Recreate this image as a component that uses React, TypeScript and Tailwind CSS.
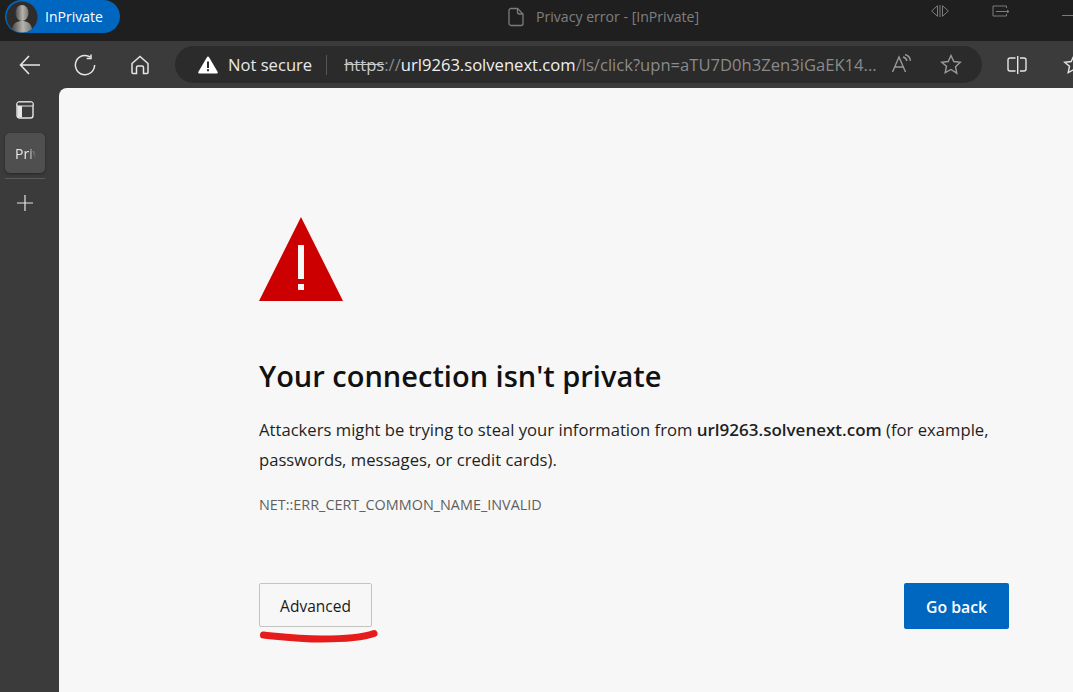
const font = { fontFamily: '"Open Sans", "Noto Sans", sans-serif' }

function TitleBar() {
  return (
    <div className="relative flex h-[41px] shrink-0 items-start bg-[#1f1f1f]">
      <div className="ml-[5px] flex h-[33px] w-[115px] items-center rounded-full bg-[#0067c0]">
        <svg width="32" height="32" viewBox="0 0 32 32" className="ml-px">
          <defs>
            <linearGradient id="face" x1="0" y1="0" x2="1" y2="0">
              <stop offset="0" stopColor="#4a4a48" />
              <stop offset="0.55" stopColor="#b5b3ae" />
              <stop offset="1" stopColor="#77756f" />
            </linearGradient>
          </defs>
          <circle cx="16" cy="16" r="15.5" fill="#2f2d2c" />
          <ellipse cx="16" cy="12" rx="6.5" ry="8" fill="url(#face)" />
          <path d="M6 28c1-6 5-8 10-8s9 2 10 8c-3 2.5-6 3.5-10 3.5S9 30.5 6 28z" fill="url(#face)" />
        </svg>
        <span className="ml-[7px] text-[14px] text-white" style={font}>InPrivate</span>
      </div>
      <div className="ml-[387px] mt-[6px] flex items-center">
        <svg width="18" height="20" viewBox="0 0 18 20" fill="none" stroke="#7c7c7c" strokeWidth="1.3">
          <path d="M2 3.5a2 2 0 0 1 2-2h6.5L16 7v9.5a2 2 0 0 1-2 2H4a2 2 0 0 1-2-2z" />
          <path d="M10.5 1.5V5a2 2 0 0 0 2 2H16" />
        </svg>
        <span className="ml-[11px] text-[14.1px] text-[#7f7f7f]" style={font}>Privacy error - [InPrivate]</span>
      </div>
      <svg width="18" height="12" viewBox="0 0 18 12" fill="none" stroke="#7c7c7c" strokeWidth="1" className="absolute left-[931px] top-[5px]">
        <path d="M6.5.7L.7 6l5.800 5.300zM11.500.7L17.300 6l-5.800 5.300z" />
        <path d="M9 0v12" />
      </svg>
      <svg width="18" height="12" viewBox="0 0 18 12" fill="none" stroke="#7c7c7c" strokeWidth="1" className="absolute left-[992px] top-[5px]">
        <path d="M14.5 3V1H1v10h13.5V9" />
        <path d="M4 6.5h13M15 5l2 1.5L15 8" />
      </svg>
      <div className="absolute left-[1062px] top-[15px] h-px w-[11px] bg-[#7c7c7c]" />
    </div>
  )
}

function ToolBar() {
  return (
    <div className="flex h-[47px] shrink-0 items-center overflow-hidden bg-[#3b3b3b]">
      <svg width="22" height="20" viewBox="0 0 22 20" fill="none" stroke="#e6e6e6" strokeWidth="1.6" className="ml-[19px] shrink-0">
        <path d="M21 10H1.5M10 1L1.5 10l8.500 9" />
      </svg>
      <svg width="22" height="22" viewBox="0 0 22 22" fill="none" stroke="#e6e6e6" strokeWidth="1.5" className="ml-[33px] shrink-0">
        <path d="M16.5 3.200A9.600 9.600 0 1 0 20.600 11" />
        <path d="M17 .5v4h-4.300" />
      </svg>
      <svg width="20" height="20" viewBox="0 0 20 20" fill="none" stroke="#e6e6e6" strokeWidth="1.5" className="ml-[34px] shrink-0">
        <path d="M2 8.5L10 1.5l8 7v9a1 1 0 0 1-1 1h-3.500v-6a1.500 1.500 0 0 0-1.500-1.500H8a1.500 1.500 0 0 0-1.500 1.500v6H3a1 1 0 0 1-1-1z" />
      </svg>
      <div className="ml-[25px] flex h-[37px] w-[807px] shrink-0 items-center rounded-full bg-[#2b2b2b]" style={font}>
        <svg width="20" height="18" viewBox="0 0 20 18" className="ml-[23px] shrink-0">
          <path d="M10 .5a1 1 0 0 1 .9.5l8.800 15a1 1 0 0 1-.9 1.500H1.200a1 1 0 0 1-.9-1.500L9.100 1a1 1 0 0 1 .9-.5z" fill="#fff" />
          <rect x="9" y="5.5" width="2" height="6.5" fill="#2b2b2b" />
          <rect x="9" y="13.2" width="2" height="2" fill="#2b2b2b" />
        </svg>
        <span className="ml-[10px] pt-[2px] text-[16.6px] text-[#e8e8e8]">Not secure</span>
        <div className="ml-[14px] h-[20px] w-px bg-[#555555]" />
        <div className="ml-[17px] whitespace-nowrap pt-[2px] text-[16.6px]">
          <span className="text-[#c9c9c9] line-through">https</span>
          <span className="text-[#8a8a8a]">://</span>
          <span className="text-[#f0f0f0]">url9263.solvenext.com</span>
          <span className="text-[#8a8a8a]">/ls/click?upn=aTU7D0h3Zen3iGaEK14...</span>
        </div>
      </div>
    </div>
  )
}

function ToolbarOverlayIcons() {
  return (
    <>
      <svg width="22" height="20" viewBox="0 0 22 20" fill="none" stroke="#9a9a9a" strokeWidth="1.4" className="absolute left-[891px] top-[54px]">
        <path d="M1.5 18L8 3l6.500 15M3.700 13h8.600" />
        <path d="M12 3c2 .5 3.500 2 4 4M14 .8c3 .5 5 3 5.500 6" />
      </svg>
      <svg width="22" height="21" viewBox="0 0 22 21" fill="none" stroke="#9a9a9a" strokeWidth="1.4" className="absolute left-[940px] top-[54px]">
        <path d="M11 1.5l2.800 6 6.500.8-4.800 4.400 1.300 6.500L11 15.500l-5.800 3.200 1.300-6.500L1.700 8.300l6.500-.8z" />
      </svg>
      <svg width="20" height="18" viewBox="0 0 20 18" fill="none" stroke="#e6e6e6" strokeWidth="1.4" className="absolute left-[1007px] top-[56px]">
        <path d="M8.5 2H3a2 2 0 0 0-2 2v9a2 2 0 0 0 2 2h5.500M13 2h4a2 2 0 0 1 2 2v9a2 2 0 0 1-2 2h-4" />
        <path d="M10.7 0v18" />
      </svg>
      <svg width="22" height="21" viewBox="0 0 22 21" fill="none" stroke="#e6e6e6" strokeWidth="1.4" className="absolute left-[1063px] top-[54px]">
        <path d="M11 1.5l2.800 6 6.500.8-4.800 4.400 1.300 6.500L11 15.500l-5.800 3.200 1.300-6.500L1.700 8.300l6.500-.8z" />
      </svg>
    </>
  )
}

function SideBar() {
  return (
    <div className="flex w-[59px] shrink-0 flex-col items-start bg-[#3b3b3b] pl-[5px]" style={font}>
      <svg width="18" height="18" viewBox="0 0 18 18" className="ml-[11px] mt-[13px]">
        <rect x="1" y="1" width="16" height="16" rx="2.5" fill="none" stroke="#e6e6e6" strokeWidth="1.4" />
        <path d="M1 2.500A1.500 1.500 0 0 1 2.500 1h13A1.500 1.500 0 0 1 17 2.500V5H1z" fill="#3b3b3b" stroke="#e6e6e6" strokeWidth="1" />
        <rect x="1.5" y="5" width="4.5" height="11.500" fill="#e6e6e6" />
      </svg>
      <div className="mt-[14px] flex h-[40px] w-[40px] items-center overflow-hidden rounded-[5px] bg-[#4f4f4f] pl-[10px] shadow-[0_1px_3px_rgba(0,0,0,0.35)]">
        <span className="w-[21px] overflow-hidden whitespace-nowrap text-[14px] text-[#e8e8e8] [mask-image:linear-gradient(to_right,#000_65%,transparent_100%)]">Privacy</span>
      </div>
      <div className="mt-[5px] h-px w-[40px] bg-[#5a5a5a]" />
      <svg width="18" height="18" viewBox="0 0 18 18" stroke="#e6e6e6" strokeWidth="1.2" className="ml-[11px] mt-[15px]">
        <path d="M9 1v16M1 9h16" />
      </svg>
    </div>
  )
}

function ErrorPage() {
  return (
    <div className="relative flex-1 overflow-hidden rounded-tl-[8px] bg-[#f7f7f7] pl-[200px] pt-[129px]" style={font}>
      <div className="flex w-[750px] flex-col">
        <svg width="84" height="84" viewBox="0 0 84 84">
          <path d="M42 0L84 84H0z" fill="#cc0000" />
          <rect x="39" y="28" width="6" height="34" fill="#f7f7f7" />
          <rect x="39" y="67" width="6" height="6" fill="#f7f7f7" />
        </svg>
        <h1 className="mt-[56px] text-[29px] font-semibold leading-[38px] text-[#111111]">Your connection isn't private</h1>
        <p className="mt-[20px] w-[750px] text-[16.65px] leading-[30px] text-[#1f1f1f]">
          Attackers might be trying to steal your information from <b className="text-[17px] font-semibold">url9263.solvenext.com</b> (for example, passwords, messages, or credit cards).
        </p>
        <p className="mt-[20px] text-[14.4px] leading-[20px] text-[#5f5f5f]">NET::ERR_CERT_COMMON_NAME_INVALID</p>
        <div className="mt-[68px] flex items-start justify-between">
          <button className="h-[44px] w-[113px] rounded-[2px] border border-[#c4c4c4] bg-[#f7f7f7] pt-[4px] text-[15.500px] text-[#1a1a1a]">Advanced</button>
          <button className="h-[46px] w-[105px] rounded-[2px] bg-[#0067c0] pt-[4px] text-[15.8px] font-semibold text-white">Go back</button>
        </div>
      </div>
      <svg width="118" height="16" viewBox="0 0 118 16" fill="none" className="absolute left-[201px] top-[540px]">
        <path d="M3.500 7c20 2 35 4 58 4 22 0 40-1 52.500-5.500" stroke="#e61c1c" strokeWidth="7" strokeLinecap="round" />
      </svg>
    </div>
  )
}

export default function App() {
  return (
    <div className="relative flex h-[692px] w-[1073px] flex-col overflow-hidden bg-[#3b3b3b]">
      <TitleBar />
      <ToolBar />
      <ToolbarOverlayIcons />
      <div className="flex min-h-0 flex-1">
        <SideBar />
        <ErrorPage />
      </div>
    </div>
  )
}
